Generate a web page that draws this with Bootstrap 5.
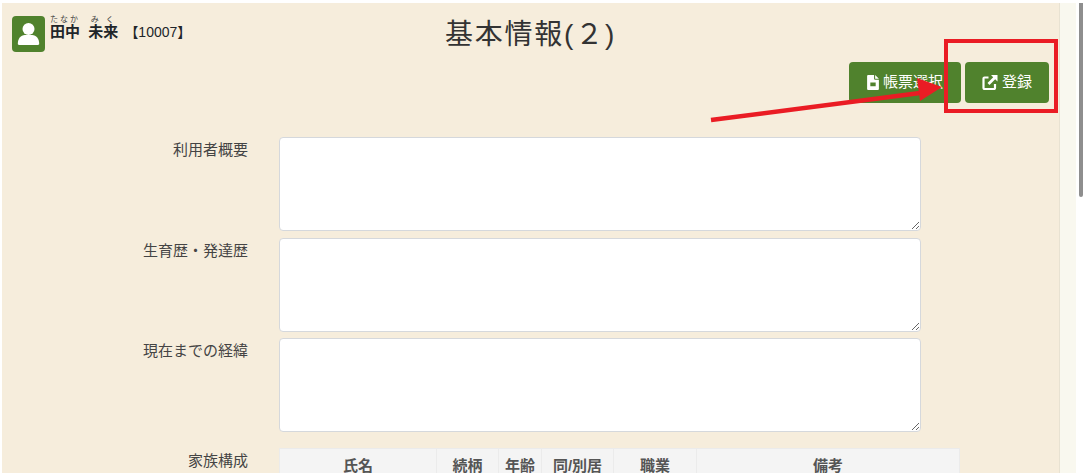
<!DOCTYPE html>
<html lang="ja">
<head>
    <meta charset="UTF-8">
    <meta name="viewport" content="width=device-width, initial-scale=1.0">
    <title>基本情報(2)</title>
    <link href="https://cdn.jsdelivr.net/npm/bootstrap@5.3.0/dist/css/bootstrap.min.css" rel="stylesheet">
    <style>
        html, body { height: 473px; overflow: hidden; }
        body { background: #fff; font-family: "Liberation Sans", "Noto Sans CJK JP", sans-serif; color: #212529; }
        .page-wrap { height: 473px; padding: 3px 0 0 2px; }
        .main-panel { width: 1058px; height: 470px; background: #f6eddc; border-right: 1px solid #e8e2d2; overflow: hidden; }
        .side-strip { width: 16px; background: #f9f8ef; }
        .scroll-gutter { width: 7px; padding-left: 3px; }
        .scroll-thumb { height: 194px; background: #8e8e8e; border-radius: 0 0 3px 3px; }
        .head-row { height: 59px; padding: 13px 0 0 10px; }
        .user-icon { width: 33px; height: 36px; background: #50822d; border-radius: 4px; }
        .user-name { font-size: 15px; font-weight: 700; margin: -1px 0 0 5px; line-height: 20px; }
        .user-name ruby { ruby-position: over; }
        .user-name rt { font-size: 8px; font-weight: 400; letter-spacing: 2px; color: #444; }
        .user-code { font-size: 14px; font-weight: 400; margin-left: 6px; }
        .page-title { position: absolute; left: 0; right: 0; top: 3px; margin: 0; text-align: center; font-size: 28px; font-weight: 400; line-height: 58px; letter-spacing: 1.800px; color: #333; }
        .head-wrap { position: relative; }
        .btn-row { height: 75px; padding-right: 10px; gap: 4px; }
        .btn-green { height: 41px; background: #50822d; border: 0; border-radius: 4px; color: #fff; font-size: 15px; padding: 0; }
        .btn-green:hover { background: #50822d; color: #fff; }
        .btn-form { width: 112px; }
        .btn-save { width: 84px; }
        .form-line { display: flex; margin-bottom: 6.500px; }
        .form-label-col { width: 246px; padding-top: 3px; text-align: right; font-size: 15px; color: #444; line-height: 20px; flex: none; }
        .form-field { margin-left: 31px; width: 642px; height: 94px; border: 1px solid #d5d8dc; border-radius: 4px; background: #fff; resize: both; display: block; }
        .family-line { margin-top: 16px; margin-bottom: 0; }
        .family-line .form-label-col { padding-top: 3px; }
        .family-table { margin-left: 31px; width: 681px; table-layout: fixed; border-collapse: collapse; flex: none; }
        .family-table th { background: #f4f4f4; border: 1px solid #ebebeb; border-bottom: 0; height: 32px; padding: 7px 0 0; text-align: center; vertical-align: top; font-size: 15px; line-height: 20px; font-weight: 700; color: #555; }
        .overlay-mark { position: absolute; left: 0; top: 0; pointer-events: none; }
    </style>
</head>
<body>
    <div class="page-wrap d-flex">
        <div class="main-panel">
            <!-- ヘッダー -->
            <div class="head-wrap">
                <div class="head-row d-flex align-items-start">
                    <div class="user-icon d-flex align-items-center justify-content-center">
                        <svg width="25" height="27" viewBox="0 0 25 27">
                            <circle cx="12.500" cy="8" r="6" fill="#fff"/>
                            <path d="M3 24c-.8 0-1.200-.5-1.200-1.200 0-5 3-8.800 7-8.800h7.400c4 0 7 3.800 7 8.800 0 .7-.4 1.200-1.200 1.200z" fill="#fff"/>
                        </svg>
                    </div>
                    <div class="user-name">
                        <ruby>田中<rt>たなか</rt></ruby>&nbsp;&nbsp;<ruby>未来<rt>みく</rt></ruby><span class="user-code">【10007】</span>
                    </div>
                </div>
                <h1 class="page-title">基本情報(２)</h1>
            </div>

            <!-- ボタン -->
            <div class="btn-row d-flex justify-content-end align-items-start">
                <button type="button" class="btn btn-green btn-form d-flex align-items-center justify-content-center gap-1">
                    <svg width="12" height="15" viewBox="0 0 11 14"><path d="M0 1a1 1 0 0 1 1-1h5.500v3.500a1 1 0 0 0 1 1H11V13a1 1 0 0 1-1 1H1a1 1 0 0 1-1-1zM7.500 0 11 3.500H7.500zM3 7v3.500h5V7z" fill="#fff" fill-rule="evenodd"/></svg>
                    <span>帳票選択</span>
                </button>
                <button type="button" class="btn btn-green btn-save d-flex align-items-center justify-content-center gap-1">
                    <svg width="16" height="15" viewBox="0 0 15 15"><path d="M6 2.500H2A1 1 0 0 0 1 3.500v9.500a1 1 0 0 0 1 1h9.500a1 1 0 0 0 1-1V9" fill="none" stroke="#fff" stroke-width="2.200"/><path d="M8.500 0h6.500v6.500L12.700 4.300 7 10 5 8 10.700 2.300z" fill="#fff"/></svg>
                    <span>登録</span>
                </button>
            </div>

            <!-- フォーム -->
            <div class="form-line">
                <div class="form-label-col">利用者概要</div>
                <textarea class="form-field"></textarea>
            </div>
            <div class="form-line">
                <div class="form-label-col">生育歴・発達歴</div>
                <textarea class="form-field"></textarea>
            </div>
            <div class="form-line">
                <div class="form-label-col">現在までの経緯</div>
                <textarea class="form-field"></textarea>
            </div>
            <div class="form-line family-line">
                <div class="form-label-col">家族構成</div>
                <table class="family-table">
                    <colgroup>
                        <col style="width: 157px"><col style="width: 62px"><col style="width: 43px"><col style="width: 72px"><col style="width: 83px"><col>
                    </colgroup>
                    <thead>
                        <tr><th>氏名</th><th>続柄</th><th>年齢</th><th>同/別居</th><th>職業</th><th>備考</th></tr>
                    </thead>
                </table>
            </div>
        </div>
        <div class="side-strip"></div>
        <div class="scroll-gutter"><div class="scroll-thumb"></div></div>
    </div>

    <!-- 赤い注釈 -->
    <svg class="overlay-mark" width="1083" height="473" viewBox="0 0 1083 473">
        <rect x="946" y="41" width="110" height="70" fill="none" stroke="#ea1c24" stroke-width="4"/>
        <path d="M711 120 L920 93" stroke="#ea1c24" stroke-width="4.500" fill="none"/>
        <path d="M917 78 L942 87 L920 101 Z" fill="#ea1c24"/>
    </svg>
    <script src="https://cdn.jsdelivr.net/npm/bootstrap@5.3.0/dist/js/bootstrap.bundle.min.js"></script>
</body>
</html>
